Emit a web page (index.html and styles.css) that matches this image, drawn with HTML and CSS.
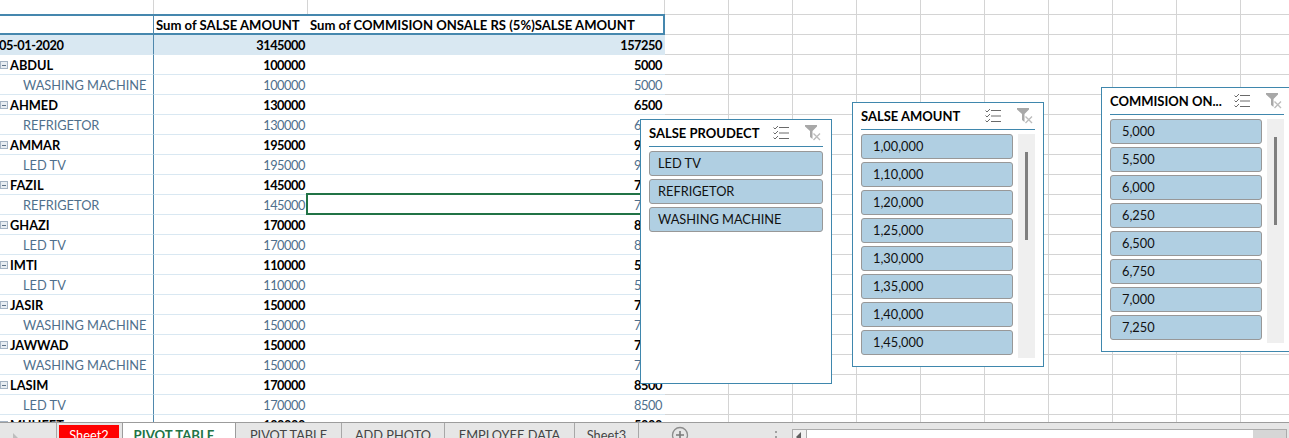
FILE: index.html
```html
<!DOCTYPE html>
<html lang="en">
<head>
    <meta charset="UTF-8">
    <title>PIVOT TABLE</title>
    <link rel="stylesheet" href="styles.css">
</head>
<body>
    <svg class="defs" width="0" height="0">
        <symbol id="multi" viewBox="0 0 16 14">
            <path d="M0.5 1.5l1.5 1.5 3-3M0.5 6.5l1.5 1.5 3-3M0.5 11.5l1.5 1.5 3-3" fill="none" stroke="#6a6a6a" stroke-width="1"/>
            <path d="M6 1.5h10M6 7h10M6 12.5h10" fill="none" stroke="#6a6a6a" stroke-width="1"/>
        </symbol>
        <symbol id="clear" viewBox="0 0 16 16">
            <path d="M0 0h12v1.5L7.5 6v8L5 12V6L0 1.5z" fill="#a8a8a8"/>
            <path d="M8.5 8.5l6.5 6.5M15 8.5l-6.5 6.5" fill="none" stroke="#bcbcbc" stroke-width="1.4"/>
        </symbol>
    </svg>

    <div class="sheet">
        <table class="pivot">
            <tr class="spacer"><td></td><td></td><td></td></tr>
            <tr class="head"><td></td><td>Sum of SALSE AMOUNT</td><td>Sum of COMMISION ONSALE RS (5%)SALSE AMOUNT</td></tr>
            <tr class="total"><td>05-01-2020</td><td>3145000</td><td>157250</td></tr>
            <tr class="name"><td><i class="minus"></i>ABDUL</td><td>100000</td><td>5000</td></tr>
            <tr class="item"><td>WASHING MACHINE</td><td>100000</td><td>5000</td></tr>
            <tr class="name"><td><i class="minus"></i>AHMED</td><td>130000</td><td>6500</td></tr>
            <tr class="item"><td>REFRIGETOR</td><td>130000</td><td>6500</td></tr>
            <tr class="name"><td><i class="minus"></i>AMMAR</td><td>195000</td><td>9750</td></tr>
            <tr class="item"><td>LED TV</td><td>195000</td><td>9750</td></tr>
            <tr class="name"><td><i class="minus"></i>FAZIL</td><td>145000</td><td>7250</td></tr>
            <tr class="item"><td>REFRIGETOR</td><td>145000</td><td class="selected">7250</td></tr>
            <tr class="name"><td><i class="minus"></i>GHAZI</td><td>170000</td><td>8500</td></tr>
            <tr class="item"><td>LED TV</td><td>170000</td><td>8500</td></tr>
            <tr class="name"><td><i class="minus"></i>IMTI</td><td>110000</td><td>5500</td></tr>
            <tr class="item"><td>LED TV</td><td>110000</td><td>5500</td></tr>
            <tr class="name"><td><i class="minus"></i>JASIR</td><td>150000</td><td>7500</td></tr>
            <tr class="item"><td>WASHING MACHINE</td><td>150000</td><td>7500</td></tr>
            <tr class="name"><td><i class="minus"></i>JAWWAD</td><td>150000</td><td>7500</td></tr>
            <tr class="item"><td>WASHING MACHINE</td><td>150000</td><td>7500</td></tr>
            <tr class="name"><td><i class="minus"></i>LASIM</td><td>170000</td><td>8500</td></tr>
            <tr class="item"><td>LED TV</td><td>170000</td><td>8500</td></tr>
            <tr class="name"><td><i class="minus"></i>MUHEET</td><td>100000</td><td>5000</td></tr>
        </table>

        <!-- Slicers -->
        <div class="slicer slicer-product">
            <div class="slicer-head">
                <span class="slicer-title">SALSE PROUDECT</span>
                <svg class="icon-multi"><use href="#multi"/></svg>
                <svg class="icon-clear"><use href="#clear"/></svg>
            </div>
            <div class="slicer-body">
                <div class="slicer-items">
                    <div class="slicer-item">LED TV</div>
                    <div class="slicer-item">REFRIGETOR</div>
                    <div class="slicer-item">WASHING MACHINE</div>
                </div>
            </div>
        </div>

        <div class="slicer slicer-amount">
            <div class="slicer-head">
                <span class="slicer-title">SALSE AMOUNT</span>
                <svg class="icon-multi"><use href="#multi"/></svg>
                <svg class="icon-clear"><use href="#clear"/></svg>
            </div>
            <div class="slicer-body">
                <div class="slicer-items numeric">
                    <div class="slicer-item">1,00,000</div>
                    <div class="slicer-item">1,10,000</div>
                    <div class="slicer-item">1,20,000</div>
                    <div class="slicer-item">1,25,000</div>
                    <div class="slicer-item">1,30,000</div>
                    <div class="slicer-item">1,35,000</div>
                    <div class="slicer-item">1,40,000</div>
                    <div class="slicer-item">1,45,000</div>
                </div>
                <div class="slicer-track"><div class="slicer-thumb"></div></div>
            </div>
        </div>

        <div class="slicer slicer-commision">
            <div class="slicer-head">
                <span class="slicer-title">COMMISION ON...</span>
                <svg class="icon-multi"><use href="#multi"/></svg>
                <svg class="icon-clear"><use href="#clear"/></svg>
            </div>
            <div class="slicer-body">
                <div class="slicer-items numeric">
                    <div class="slicer-item">5,000</div>
                    <div class="slicer-item">5,500</div>
                    <div class="slicer-item">6,000</div>
                    <div class="slicer-item">6,250</div>
                    <div class="slicer-item">6,500</div>
                    <div class="slicer-item">6,750</div>
                    <div class="slicer-item">7,000</div>
                    <div class="slicer-item">7,250</div>
                </div>
                <div class="slicer-track"><div class="slicer-thumb"></div></div>
            </div>
        </div>
    </div>

    <!-- Sheet tabs -->
    <div class="tabbar">
        <div class="tab-nav"><span class="tab-arrow"></span></div>
        <div class="tab tab-red">Sheet2</div>
        <div class="tab tab-active">PIVOT TABLE</div>
        <div class="tab tab-pivot2">PIVOT TABLE</div>
        <div class="tab tab-photo">ADD PHOTO</div>
        <div class="tab tab-employee">EMPLOYEE DATA</div>
        <div class="tab tab-sheet3">Sheet3</div>
        <svg class="tab-add" width="24" height="24" viewBox="0 0 24 24">
            <circle cx="12" cy="12" r="7.5" fill="none" stroke="#8c8c8c" stroke-width="1.3"/>
            <path d="M12 8v8M8 12h8" stroke="#7a7a7a" stroke-width="1.6"/>
        </svg>
        <div class="tab-dots"><i></i><i></i></div>
        <div class="hscroll">
            <div class="hscroll-left"><span class="hscroll-arrow"></span></div>
            <div class="hscroll-track"></div>
            <div class="hscroll-thumb"></div>
        </div>
    </div>
</body>
</html>
```

FILE: styles.css
```css
html, body {
    margin: 0;
    padding: 0;
    height: 438px;
    overflow: hidden;
    background: #fff;
}
body {
    font-family: Lato, "Open Sans", sans-serif;
    font-size: 12.8px;
    color: #000;
    display: flex;
    flex-direction: column;
}
.defs {
    position: absolute;
}

/* Worksheet with gridlines */
.sheet {
    position: relative;
    height: 422px;
    flex: none;
    overflow: hidden;
    background-color: #fff;
    background-image:
        linear-gradient(#d4d4d4 1px, transparent 1px),
        linear-gradient(90deg, #d4d4d4 1px, transparent 1px);
    background-size: 100% 20px, 64px 100%;
    background-position: 0 14px, 24px 0;
}

/* Pivot table */
.pivot {
    width: 665px;
    table-layout: fixed;
    border-spacing: 0;
    background: #fff;
}
.pivot td {
    box-sizing: border-box;
    height: 20px;
    padding: 1px 3px 0 0;
    text-align: right;
    white-space: nowrap;
    overflow: hidden;
    letter-spacing: -0.45px;
    border-bottom: 1px solid #d9e8f2;
}
.pivot td:nth-child(1) {
    width: 154px;
    text-align: left;
    letter-spacing: 0;
    border-right: 1px solid #4f88ad;
}
.pivot td:nth-child(2) {
    width: 154px;
}
.pivot .spacer td {
    height: 14px;
    padding: 0;
    border-bottom: 0;
    border-right: 1px solid #d4d4d4;
}
.pivot .head td {
    height: 21px;
    padding: 0 0 0 2px;
    text-align: left;
    font-weight: 700;
    font-size: 13.1px;
    letter-spacing: 0;
    border-top: 2px solid #4587ae;
    border-bottom: 2px solid #4587ae;
}
.pivot .head td:nth-child(3) {
    border-right: 2px solid #4587ae;
}
.pivot .total td {
    font-weight: 700;
    background: #d9e8f2;
}
.pivot .total td:first-child {
    text-indent: -1px;
    letter-spacing: -0.45px;
}
.pivot .name td {
    font-weight: 700;
}
.pivot .name td:first-child {
    padding-left: 10px;
    position: relative;
}
.pivot .item td {
    color: #4f6f8c;
}
.pivot .item td:first-child {
    padding-left: 23px;
}
.pivot td.selected {
    position: relative;
    overflow: visible;
}
.selected::after {
    content: "";
    position: absolute;
    left: -2px;
    right: 0;
    top: -2px;
    bottom: -1px;
    border: 2px solid #217346;
}
.minus {
    position: absolute;
    left: 0;
    top: 6px;
    box-sizing: border-box;
    width: 8px;
    height: 8px;
    border: 1px solid #a6b4c4;
    background: linear-gradient(#5d7288, #5d7288) center / 4px 1px no-repeat #e8edf2;
}

/* Slicers */
.slicer {
    position: absolute;
    box-sizing: border-box;
    width: 192px;
    height: 265px;
    padding: 0 8px;
    background: #fff;
    border: 1px solid #3f87ad;
}
.slicer-product {
    left: 640px;
    top: 119px;
}
.slicer-amount {
    left: 852px;
    top: 102px;
}
.slicer-commision {
    left: 1101px;
    top: 87px;
}
.slicer-head {
    display: flex;
    align-items: center;
    height: 26px;
    border-bottom: 1px solid #3f87ad;
}
.slicer-title {
    font-weight: 700;
    font-size: 13px;
    flex: 1;
}
.icon-multi {
    width: 16px;
    height: 14px;
    margin-right: 16px;
}
.icon-clear {
    width: 16px;
    height: 16px;
    margin-right: 2px;
}
.slicer-body {
    display: flex;
    gap: 5px;
    margin-top: 4px;
}
.slicer-items {
    flex: 1;
    display: flex;
    flex-direction: column;
    gap: 3px;
}
.slicer-item {
    box-sizing: border-box;
    height: 25px;
    line-height: 23px;
    padding-left: 8px;
    background: #b0cfe2;
    border: 1px solid #989898;
    border-radius: 3px;
    color: #111;
}
.numeric .slicer-item {
    padding-left: 11px;
}
.slicer-track {
    flex: none;
    box-sizing: border-box;
    width: 17px;
    height: 224px;
    padding: 18px 7px 0;
    background: #efefef;
}
.slicer-thumb {
    height: 88px;
    background: #7f7f7f;
}

/* Tab bar */
.tabbar {
    flex: none;
    display: flex;
    height: 16px;
    overflow: hidden;
    background: #e6e6e6;
    border-top: 1px solid #9c9c9c;
    box-sizing: border-box;
    color: #444;
}
.tab-nav {
    flex: none;
    box-sizing: border-box;
    width: 57px;
    border-right: 1px solid #a8a8a8;
    padding: 10px 0 0 13px;
}
.tab-arrow {
    display: block;
    width: 0;
    height: 0;
    border-left: 5px solid #bdbdbd;
    border-top: 5px solid transparent;
    border-bottom: 5px solid transparent;
}
.tab {
    flex: none;
    box-sizing: border-box;
    height: 26px;
    line-height: 24px;
    text-align: center;
    white-space: nowrap;
}
.tab-red {
    width: 60px;
    margin: 2px 3px 0 2px;
    line-height: 20px;
    background: #ff0000;
    color: #fff;
}
.tab-active {
    width: 114px;
    margin-top: -1px;
    padding-right: 10px;
    background: #fff;
    color: #217346;
    font-size: 13.2px;
    font-weight: 700;
    line-height: 26px;
    border-left: 1px solid #9c9c9c;
    border-right: 1px solid #9c9c9c;
}
.tab-pivot2 {
    width: 106px;
    border-right: 1px solid #a8a8a8;
}
.tab-photo {
    width: 103px;
    border-right: 1px solid #a8a8a8;
}
.tab-employee {
    width: 130px;
    border-right: 1px solid #a8a8a8;
}
.tab-sheet3 {
    width: 64px;
    border-right: 1px solid #a8a8a8;
}
.tab-add {
    flex: none;
    margin: 0 0 0 29px;
}
.tab-dots {
    flex: none;
    display: flex;
    flex-direction: column;
    gap: 3px;
    margin: 8px 0 0 83px;
}
.tab-dots i {
    width: 2px;
    height: 2px;
    background: #a0a0a0;
}
.hscroll {
    flex: none;
    display: flex;
    width: 495px;
    height: 9px;
    margin: 6px 0 0 15px;
}
.hscroll-left {
    box-sizing: border-box;
    width: 15px;
    height: 12px;
    background: #f0f0f0;
    border: 1px solid #ababab;
    padding: 2px 0 0 3px;
}
.hscroll-arrow {
    display: block;
    width: 0;
    height: 0;
    border-right: 5px solid #606060;
    border-top: 5px solid transparent;
    border-bottom: 5px solid transparent;
}
.hscroll-track {
    flex: 1;
    height: 12px;
    background: #fff;
    border-top: 1px solid #ababab;
}
.hscroll-thumb {
    width: 33px;
    height: 12px;
    background: #d6d6d6;
    border-right: 1px solid #ababab;
    border-top: 1px solid #ababab;
}
```
